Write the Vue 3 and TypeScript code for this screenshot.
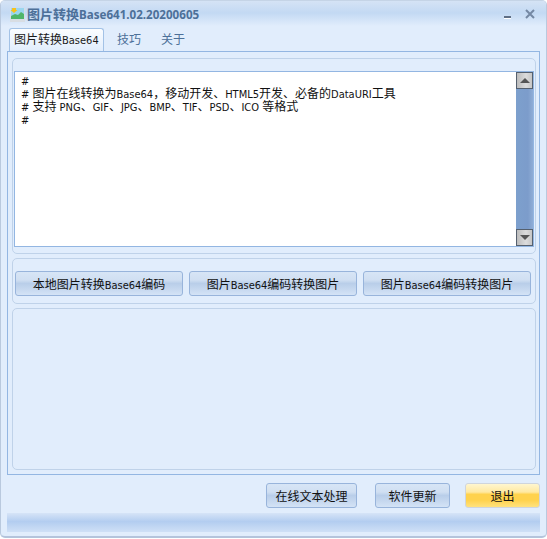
<script setup lang="ts">
interface Run { text: string; latin: boolean }

const toRuns = (s: string): Run[] =>
  (s.match(/[\u0020-\u007e]+|[^\u0020-\u007e]+/g) ?? []).map((text) => ({
    text,
    latin: /^[\u0020-\u007e]/.test(text),
  }))

const lines: Run[][] = [
  '#',
  '# 图片在线转换为Base64，移动开发、HTML5开发、必备的DataURI工具',
  '# 支持 PNG、GIF、JPG、BMP、TIF、PSD、ICO 等格式',
  '#',
].map(toRuns)
const activeTab = toRuns('图片转换Base64')
const tabs: string[] = ['技巧', '关于']
const actions: Run[][] = ['本地图片转换Base64编码', '图片Base64编码转换图片', '图片Base64编码转换图片'].map(toRuns)
</script>

<template>
  <div class="window">
    <header class="titlebar">
      <svg class="logo" width="16" height="16" viewBox="0 0 16 16">
        <rect x="1" y="2" width="15" height="14" fill="#d8dde3" />
        <rect x="2" y="2" width="13" height="11" fill="#9ad6ee" />
        <path d="M3 2 H7 V4 H8.5 L5 7 L1.5 4 H3 Z" fill="#f7c21e" />
        <path d="M2 13 L2 10 L6 8 L9 9 L12 6 L15 8 L15 13 Z" fill="#4fb56a" />
      </svg>
      <span class="title">图片转换<span class="title-latin">Base641.02.20200605</span></span>
      <span class="controls">
        <svg width="9" height="5" viewBox="0 0 9 5"><rect x="1" y="2" width="7" height="2" fill="#5f6f86" /><rect x="1" y="4" width="7" height="1" fill="#fff" /></svg>
        <svg width="12" height="10" viewBox="0 0 12 10"><path d="M2 1 L10 9 M10 1 L2 9" stroke="#7488a3" stroke-width="2" fill="none" /></svg>
      </span>
    </header>

    <nav class="tabs">
      <span class="tab active"><span v-for="(r, i) in activeTab" :key="i" :class="{ latin: r.latin }">{{ r.text }}</span></span>
      <span v-for="t in tabs" :key="t" class="tab">{{ t }}</span>
    </nav>

    <main class="panel">
      <section class="group editor">
        <div class="textbox">
          <div class="text">
            <div v-for="(l, i) in lines" :key="i" class="line"><span v-for="(r, j) in l" :key="j" :class="{ latin: r.latin }">{{ r.text }}</span></div>
          </div>
          <div class="scrollbar">
            <span class="sb-btn"><i class="arrow up"></i></span>
            <span class="sb-track"></span>
            <span class="sb-btn"><i class="arrow down"></i></span>
          </div>
        </div>
      </section>
      <section class="group actions">
        <button v-for="(a, i) in actions" :key="i" class="btn action"><span v-for="(r, j) in a" :key="j" :class="{ latin: r.latin }">{{ r.text }}</span></button>
      </section>
      <section class="group result"></section>
    </main>

    <footer class="footer">
      <button class="btn online">在线文本处理</button>
      <button class="btn update">软件更新</button>
      <button class="btn exit">退出</button>
    </footer>
    <div class="statusbar"></div>
  </div>
</template>

<style>
html, body { margin: 0; background: #fff; }
</style>

<style scoped>
.window {
  width: 547px;
  height: 538px;
  margin-bottom: 1px;
  box-sizing: border-box;
  border: 1px solid #b9c9de;
  border-top-color: #c5d4e6;
  border-bottom: 2px solid #b4c4dc;
  border-radius: 5px;
  background: #e1edfc;
  padding: 0 6px;
  display: flex;
  flex-direction: column;
  font-family: "Noto Sans CJK SC", sans-serif;
  font-size: 12px;
  color: #000;
  overflow: hidden;
}
.latin {
  font-family: "DejaVu Sans Condensed", "DejaVu Sans", sans-serif;
  font-size: 11px;
}
.titlebar {
  margin: 0 -6px;
  height: 26px;
  flex: none;
  box-sizing: border-box;
  padding: 0 10px 2px 8px;
  display: flex;
  align-items: center;
  background: linear-gradient(#d5e3f5 0, #c3d9f3 12px, #e1edfc 25px);
}
.logo { flex: none; margin: 1px 2px 0 0; }
.title {
  font-weight: 700;
  font-size: 13px;
  color: #4d7099;
  white-space: nowrap;
}
.title-latin {
  font-family: "Noto Sans", sans-serif;
  font-size: 11.6px;
}
.controls {
  margin-left: auto;
  display: flex;
  align-items: flex-end;
  gap: 12px;
  padding-top: 2px;
}
.tabs {
  height: 24px;
  flex: none;
  display: flex;
  align-items: flex-end;
  padding-left: 2px;
}
.tab {
  box-sizing: border-box;
  height: 23px;
  line-height: 21px;
  padding: 0 10px;
  color: #4c7099;
  font-size: 12px;
}
.tab.active {
  height: 23px;
  width: 95px;
  line-height: 19px;
  padding: 0 0 0 4px;
  margin-right: 3px;
  color: #1a1a1a;
  white-space: nowrap;
  border: 1px solid #a3c2e6;
  border-bottom: 0;
  border-radius: 3px 3px 0 0;
  background: linear-gradient(#fbfdff, #e1edfc);
}
.panel {
  height: 424px;
  flex: none;
  box-sizing: border-box;
  border: 1px solid #93b6e2;
  padding: 6px 3px 4px 4px;
  display: flex;
  flex-direction: column;
  gap: 4px;
}
.group {
  box-sizing: border-box;
  border: 1px solid #bfd2e9;
  border-radius: 5px;
  background: #e1edfc;
}
.editor {
  height: 196px;
  padding: 12px 1px 6px;
}
.textbox {
  height: 100%;
  box-sizing: border-box;
  border: 1px solid #93b6e2;
  background: #fff;
  display: flex;
}
.text {
  flex: 1;
  padding: 1px 0 0 6px;
  font-size: 12px;
  line-height: 13px;
  white-space: nowrap;
  color: #111;
}
.line { height: 13px; }
.scrollbar {
  width: 17px;
  display: flex;
  flex-direction: column;
  flex: none;
}
.sb-btn {
  box-sizing: border-box;
  height: 17px;
  flex: none;
  border: 1px solid #55606e;
  background: linear-gradient(90deg, #bcbcbc, #dcdcdc 60%, #c6c6c6);
  display: flex;
  align-items: center;
  justify-content: center;
}
.sb-track {
  flex: 1;
  background: linear-gradient(90deg, #7da0cd, #7c9ccb 70%, #8fadd6);
}
.arrow {
  width: 0;
  height: 0;
  border-left: 5px solid transparent;
  border-right: 5px solid transparent;
}
.arrow.up { border-bottom: 5px solid #555; }
.arrow.down { border-top: 5px solid #555; }
.actions {
  height: 46px;
  padding: 12px 2px 0 2px;
  display: flex;
  gap: 6px;
  align-items: flex-start;
}
.result { flex: 1; }
.btn {
  box-sizing: border-box;
  height: 25px;
  padding: 0;
  margin: 0;
  border: 1px solid #98b4db;
  border-radius: 3px;
  font-family: inherit;
  font-size: 12px;
  color: #111;
  white-space: nowrap;
  background: linear-gradient(#d7e5f6 0, #d0dff2 35%, #b9cee9 50%, #c6d8ef 75%, #d4e3f6 100%);
}
.action { width: 168px; flex: none; }
.footer {
  height: 38px;
  flex: none;
  box-sizing: border-box;
  padding: 8px 0 0 259px;
  margin-right: -6px;
  display: flex;
  align-items: flex-start;
}
.online { width: 91px; margin-right: 18px; }
.update { width: 75px; margin-right: 15px; }
.exit {
  width: 75px;
  border-color: #cfd5dc;
  background: linear-gradient(#fff6cf 0, #ffe9a2 35%, #ffd24d 45%, #ffd24d 70%, #ffe27e 100%);
}
.statusbar {
  height: 19px;
  flex: none;
  background: linear-gradient(#d6e4f7 0, #b3cdf0 45%, #cfe0f6 100%);
}
</style>
